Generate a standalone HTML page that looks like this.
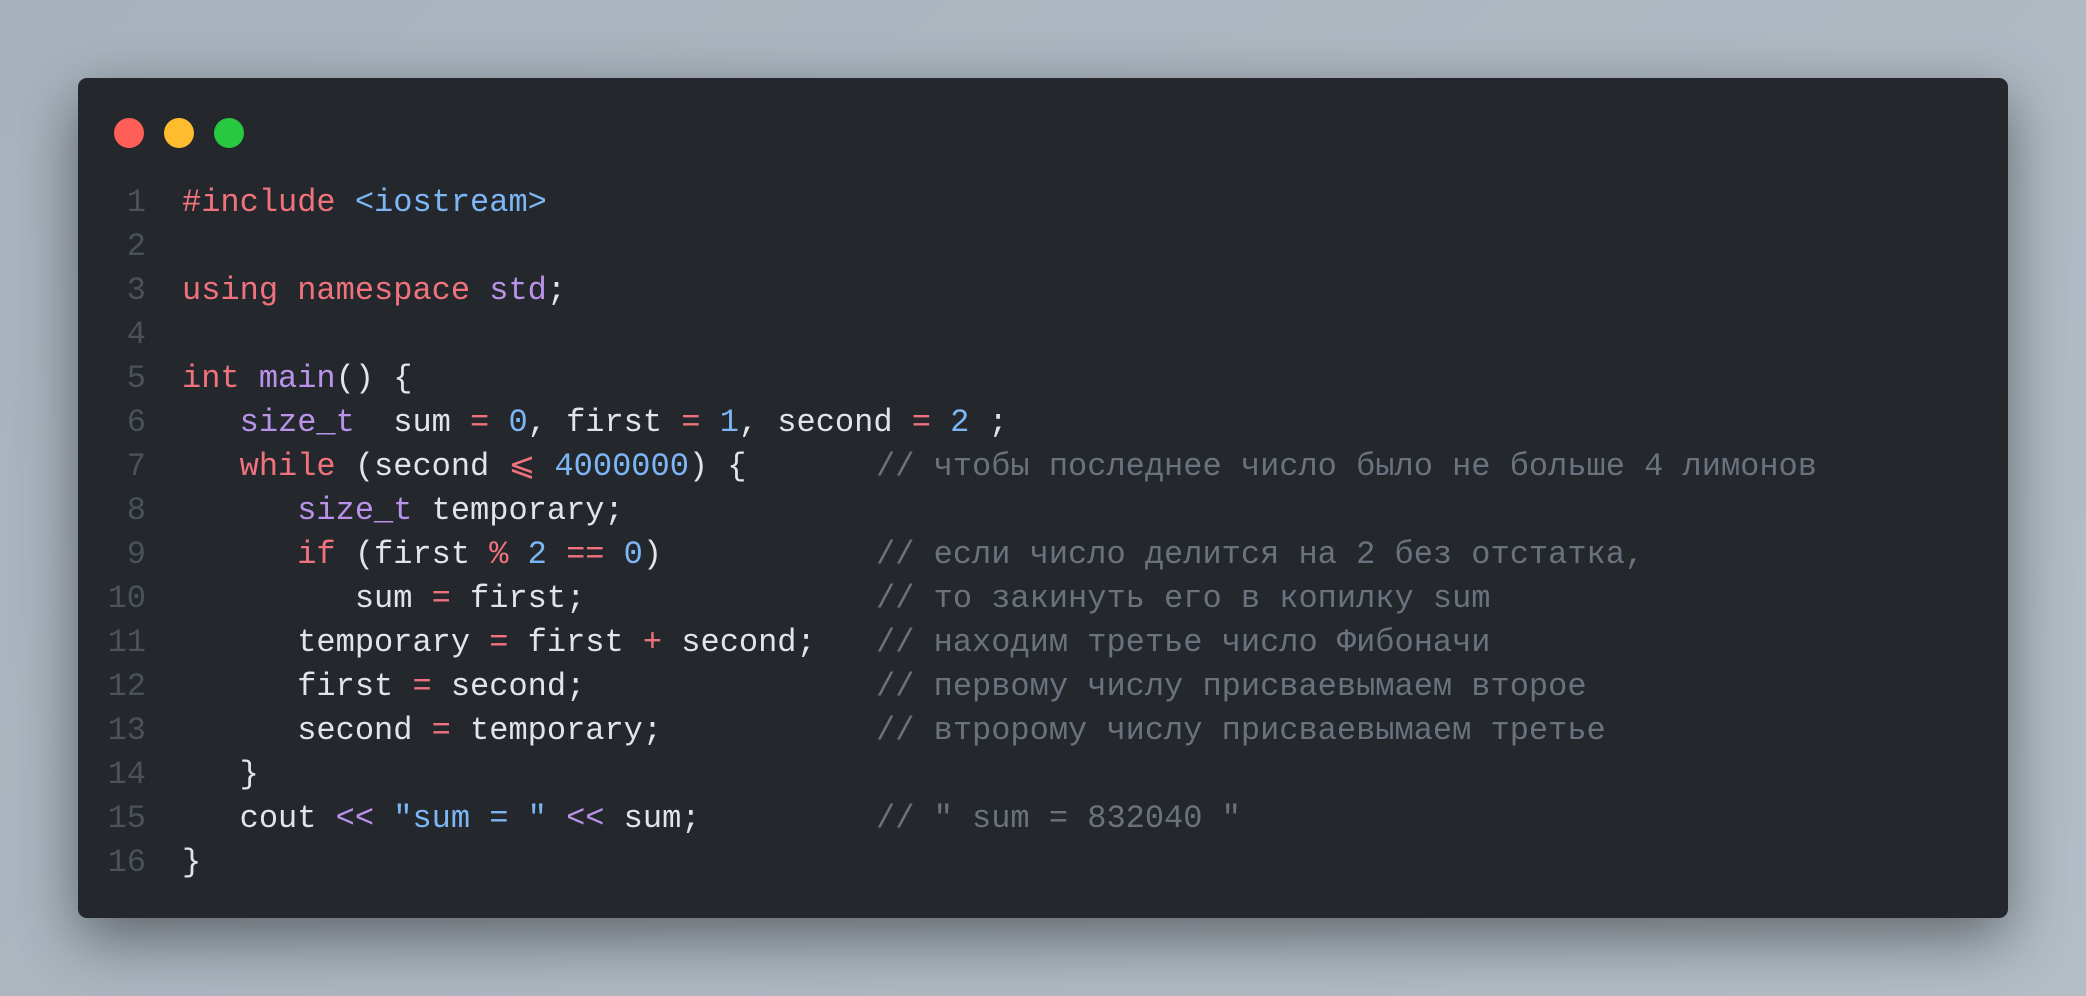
<!DOCTYPE html>
<html><head><meta charset="utf-8"><style>
html,body{margin:0;padding:0;}
body{width:2086px;height:996px;background:linear-gradient(135deg,#a7b2bc,#b3bdc6);position:relative;overflow:hidden;font-family:"Liberation Mono","DejaVu Sans Mono",monospace;}
.win{position:absolute;left:78px;top:78px;width:1930px;height:840px;background:#24282d;border-radius:9px;box-shadow:0 20px 60px rgba(0,0,0,0.45);}
.dot{position:absolute;top:118px;width:30px;height:30px;border-radius:50%;}
.ln{position:absolute;left:0;width:68px;text-align:right;color:#4b525a;}
.l{position:absolute;left:104px;white-space:pre;color:#e1e4e8;}
.row{position:absolute;left:0;height:44px;line-height:44px;font-size:32px;width:1930px;}
.c{position:absolute;left:694px;top:0;color:#6a737d;white-space:pre;}
.k{color:#f0727c}.p{color:#b993ea}.b{color:#7cb6f5}.o{color:#f0727c}
</style></head><body>
<div class="win">
<div class="dot" style="left:36px;top:40px;background:#ff5f57"></div>
<div class="dot" style="left:86px;top:40px;background:#febc2e"></div>
<div class="dot" style="left:136px;top:40px;background:#28c840"></div>
</div>
<div style="position:absolute;left:78px;top:80px;">
<div class="row" style="top:101px"><span class="ln">1</span><span class="l"><span class="k">#include</span> <span class="b">&lt;iostream&gt;</span></span></div>
<div class="row" style="top:145px"><span class="ln">2</span></div>
<div class="row" style="top:189px"><span class="ln">3</span><span class="l"><span class="k">using namespace</span> <span class="p">std</span>;</span></div>
<div class="row" style="top:233px"><span class="ln">4</span></div>
<div class="row" style="top:277px"><span class="ln">5</span><span class="l"><span class="k">int</span> <span class="p">main</span>() {</span></div>
<div class="row" style="top:321px"><span class="ln">6</span><span class="l">   <span class="p">size_t</span>  sum <span class="o">=</span> <span class="b">0</span>, first <span class="o">=</span> <span class="b">1</span>, second <span class="o">=</span> <span class="b">2</span> ;</span></div>
<div class="row" style="top:365px"><span class="ln">7</span><span class="l">   <span class="k">while</span> (second <span class="o">⩽</span> <span class="b">4000000</span>) {<span class="c">// чтобы последнее число было не больше 4 лимонов</span></span></div>
<div class="row" style="top:409px"><span class="ln">8</span><span class="l">      <span class="p">size_t</span> temporary;</span></div>
<div class="row" style="top:453px"><span class="ln">9</span><span class="l">      <span class="k">if</span> (first <span class="o">%</span> <span class="b">2</span> <span class="o">==</span> <span class="b">0</span>)<span class="c">// если число делится на 2 без отстатка,</span></span></div>
<div class="row" style="top:497px"><span class="ln">10</span><span class="l">         sum <span class="o">=</span> first;<span class="c">// то закинуть его в копилку sum</span></span></div>
<div class="row" style="top:541px"><span class="ln">11</span><span class="l">      temporary <span class="o">=</span> first <span class="o">+</span> second;<span class="c">// находим третье число Фибоначи</span></span></div>
<div class="row" style="top:585px"><span class="ln">12</span><span class="l">      first <span class="o">=</span> second;<span class="c">// первому числу присваевымаем второе</span></span></div>
<div class="row" style="top:629px"><span class="ln">13</span><span class="l">      second <span class="o">=</span> temporary;<span class="c">// втророму числу присваевымаем третье</span></span></div>
<div class="row" style="top:673px"><span class="ln">14</span><span class="l">   }</span></div>
<div class="row" style="top:717px"><span class="ln">15</span><span class="l">   cout <span class="p">&lt;&lt;</span> <span class="b">"sum = "</span> <span class="p">&lt;&lt;</span> sum;<span class="c">// " sum = 832040 "</span></span></div>
<div class="row" style="top:761px"><span class="ln">16</span><span class="l">}</span></div>
</div>
</body></html>
